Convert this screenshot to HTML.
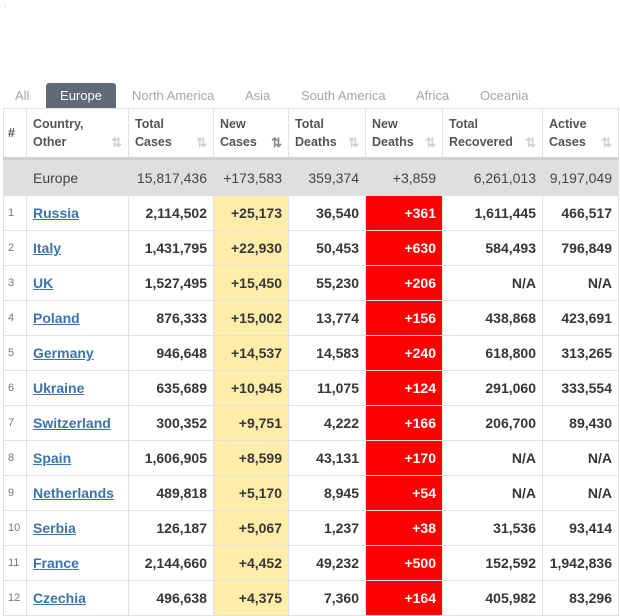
<!DOCTYPE html><html><head><style>
body{margin:0;width:620px;height:614px;background:#fff;font-family:"Liberation Sans",Arial,sans-serif;overflow:hidden;position:relative}
.tabs{position:absolute;top:83px;left:0;height:25px;font-size:13px;color:#a0a8b0}
.tab{position:absolute;top:0;height:25px;line-height:25px;white-space:nowrap}
.act{background:#5f6b76;color:#fff;border-radius:3px 3px 0 0;text-align:center}
table{position:absolute;top:108px;left:3px;border-collapse:collapse;table-layout:fixed;width:615px}
td,th{border:1px solid #e2e2e2;padding:0 6px;font-size:13px;color:#363636;text-align:right;white-space:nowrap;overflow:hidden}
th{height:48px;text-align:left;font-size:12.5px;font-weight:bold;color:#555;vertical-align:middle;position:relative;line-height:18px;border-bottom:3px solid #d0d0d0}
th .s{position:absolute;right:6px;top:25px;color:#d0d0d0;font-size:13px;font-weight:bold}
tr.eu td{background:#dfdfdf;height:35px;color:#444;font-size:14px}
tr.r td{height:34px;font-weight:bold;font-size:14px}
tr.r td.n{font-size:11px;color:#777;font-weight:normal;text-align:left;padding:0 4px}
td.c{text-align:left}td.c a{color:#3b74ad;text-decoration:underline}
td.y{background:#ffeeaa}td.d{background:#ff0000;color:#fff}
</style></head><body>
<div style="position:absolute;top:0;left:4px;font-size:8px;color:#999">.</div>
<div class="tabs">
<div class="tab" style="left:15px">All</div>
<div class="tab act" style="left:46px;width:70px">Europe</div>
<div class="tab" style="left:132px">North America</div>
<div class="tab" style="left:245px">Asia</div>
<div class="tab" style="left:301px">South America</div>
<div class="tab" style="left:416px">Africa</div>
<div class="tab" style="left:480px">Oceania</div>
</div>
<table>
<colgroup><col style="width:23px"><col style="width:102px"><col style="width:85px"><col style="width:75px"><col style="width:77px"><col style="width:77px"><col style="width:100px"><col style="width:76px"></colgroup>
<tr><th style="padding:0 4px;vertical-align:middle">#</th><th>Country,<br>Other<span class="s">⇅</span></th><th>Total<br>Cases<span class="s">⇅</span></th><th>New<br>Cases<span class="s" style="color:#888">⇅</span></th><th>Total<br>Deaths<span class="s">⇅</span></th><th>New<br>Deaths<span class="s">⇅</span></th><th>Total<br>Recovered<span class="s">⇅</span></th><th>Active<br>Cases<span class="s">⇅</span></th></tr>
<tr class="eu"><td></td><td style="text-align:left">Europe</td><td>15,817,436</td><td>+173,583</td><td>359,374</td><td>+3,859</td><td>6,261,013</td><td>9,197,049</td></tr>
<tr class="r"><td class="n">1</td><td class="c"><a>Russia</a></td><td>2,114,502</td><td class="y">+25,173</td><td>36,540</td><td class="d">+361</td><td>1,611,445</td><td>466,517</td></tr>
<tr class="r"><td class="n">2</td><td class="c"><a>Italy</a></td><td>1,431,795</td><td class="y">+22,930</td><td>50,453</td><td class="d">+630</td><td>584,493</td><td>796,849</td></tr>
<tr class="r"><td class="n">3</td><td class="c"><a>UK</a></td><td>1,527,495</td><td class="y">+15,450</td><td>55,230</td><td class="d">+206</td><td>N/A</td><td>N/A</td></tr>
<tr class="r"><td class="n">4</td><td class="c"><a>Poland</a></td><td>876,333</td><td class="y">+15,002</td><td>13,774</td><td class="d">+156</td><td>438,868</td><td>423,691</td></tr>
<tr class="r"><td class="n">5</td><td class="c"><a>Germany</a></td><td>946,648</td><td class="y">+14,537</td><td>14,583</td><td class="d">+240</td><td>618,800</td><td>313,265</td></tr>
<tr class="r"><td class="n">6</td><td class="c"><a>Ukraine</a></td><td>635,689</td><td class="y">+10,945</td><td>11,075</td><td class="d">+124</td><td>291,060</td><td>333,554</td></tr>
<tr class="r"><td class="n">7</td><td class="c"><a>Switzerland</a></td><td>300,352</td><td class="y">+9,751</td><td>4,222</td><td class="d">+166</td><td>206,700</td><td>89,430</td></tr>
<tr class="r"><td class="n">8</td><td class="c"><a>Spain</a></td><td>1,606,905</td><td class="y">+8,599</td><td>43,131</td><td class="d">+170</td><td>N/A</td><td>N/A</td></tr>
<tr class="r"><td class="n">9</td><td class="c"><a>Netherlands</a></td><td>489,818</td><td class="y">+5,170</td><td>8,945</td><td class="d">+54</td><td>N/A</td><td>N/A</td></tr>
<tr class="r"><td class="n">10</td><td class="c"><a>Serbia</a></td><td>126,187</td><td class="y">+5,067</td><td>1,237</td><td class="d">+38</td><td>31,536</td><td>93,414</td></tr>
<tr class="r"><td class="n">11</td><td class="c"><a>France</a></td><td>2,144,660</td><td class="y">+4,452</td><td>49,232</td><td class="d">+500</td><td>152,592</td><td>1,942,836</td></tr>
<tr class="r"><td class="n">12</td><td class="c"><a>Czechia</a></td><td>496,638</td><td class="y">+4,375</td><td>7,360</td><td class="d">+164</td><td>405,982</td><td>83,296</td></tr>
</table>
</body></html>
